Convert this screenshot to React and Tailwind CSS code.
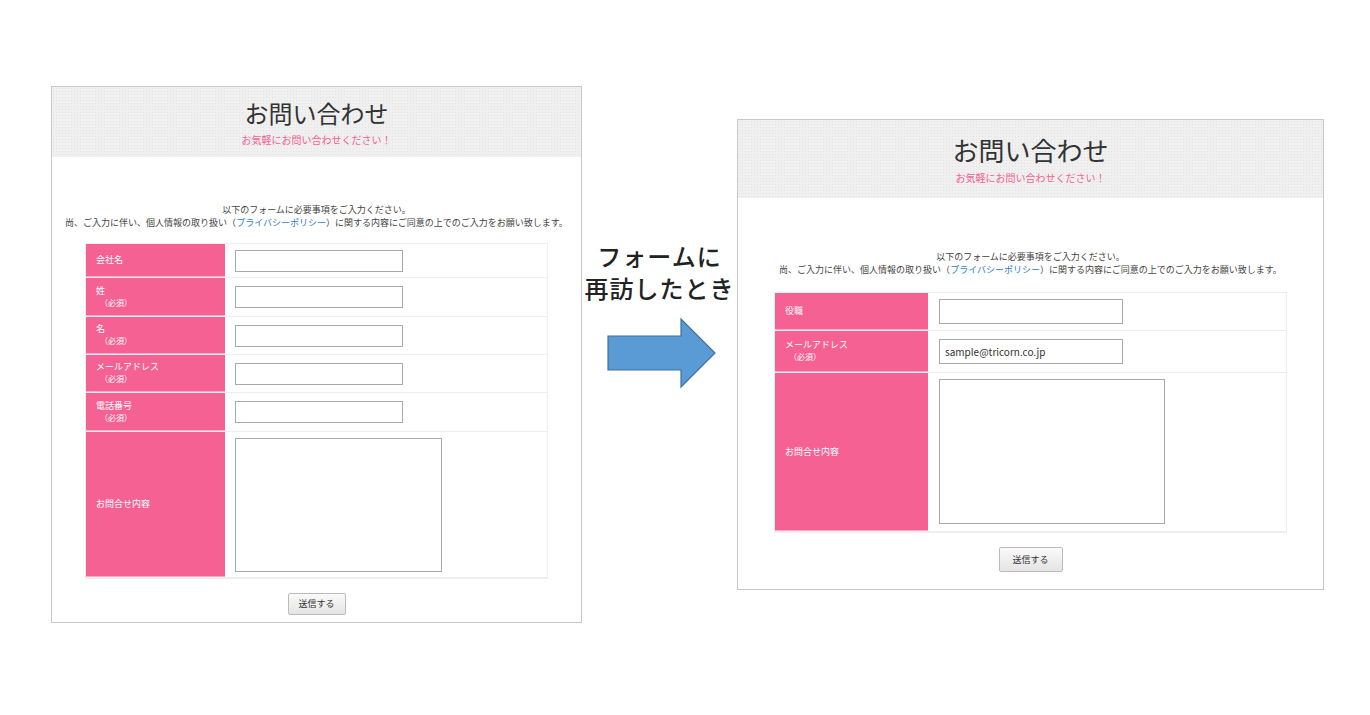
const F = { fontFamily: '"Noto Sans CJK JP", "Noto Sans", sans-serif' };
const hdrBg = {
  backgroundColor: '#f0f0f0',
  backgroundImage: 'radial-gradient(#e2e2e2 0.8px, transparent 0.8px)',
  backgroundSize: '3px 3px',
};

function Label({ t, req }) {
  return (
    <div className="w-full h-full bg-[#f46192] text-white text-[9px] leading-[12px] px-[10px] flex flex-col justify-center border-b border-[#f9a9c4]">
      <span>{t}</span>
      {req && <span className="pl-[4px] text-[8px]">（必須）</span>}
    </div>
  );
}

function Panel({ big, rows, w, h, hdrH }) {
  return (
    <div className={`bg-white border border-[#c8c8c8] flex flex-col ${w} ${h}`} style={F}>
      <div className={`${hdrH} flex flex-col items-center justify-center`} style={hdrBg}>
        <div className={big ? 'text-[26px] leading-[32px] text-[#333]' : 'text-[24px] leading-[30px] text-[#333]'}>お問い合わせ</div>
        <div className="text-[10px] text-[#f46192] mt-[4px]">お気軽にお問い合わせください！</div>
      </div>
      <div className={`text-[9px] leading-[13px] text-[#444] text-center whitespace-nowrap ${big ? 'mt-[52px]' : 'mt-[46px]'}`}>
        <div>以下のフォームに必要事項をご入力ください。</div>
        <div>尚、ご入力に伴い、個人情報の取り扱い（<span className="text-[#2a7dc9]">プライバシーポリシー</span>）に関する内容にご同意の上でのご入力をお願い致します。</div>
      </div>
      <div className={`${big ? 'mx-[36px] mt-[16px]' : 'mx-[33px] mt-[14px]'} border border-[#eee]`}>
        {rows.map((r, i) => (
          <div key={i} className="flex border-b border-[#eee]" style={{ height: r.h }}>
            <div className={`${big ? 'w-[153px]' : 'w-[139px]'} shrink-0 flex`}><Label t={r.t} req={r.req} /></div>
            <div className={`flex-1 ${big ? 'pl-[11px]' : 'pl-[10px]'} flex ${r.area ? 'items-start pt-[6px]' : 'items-center'}`}>
              {r.area ? (
                <div className={`${big ? 'w-[226px] h-[145px]' : 'w-[207px] h-[134px]'} border border-[#aaa]`} />
              ) : (
                <div className={`${big ? 'w-[184px] h-[25px]' : 'w-[168px] h-[22px]'} border border-[#aaa] text-[10px] text-[#333] px-[5px] flex items-center`}>{r.v || ''}</div>
              )}
            </div>
          </div>
        ))}
      </div>
      <div className="flex justify-center mt-[14px]">
        <div className={`${big ? 'w-[64px] h-[25px]' : 'w-[58px] h-[22px]'} border border-[#bbb] rounded-[2px] bg-gradient-to-b from-[#fafafa] to-[#e4e4e4] text-[9px] text-[#333] flex items-center justify-center`}>送信する</div>
      </div>
    </div>
  );
}

export default function App() {
  const left = [
    { t: '会社名', h: 34 }, { t: '姓', req: 1, h: 39 }, { t: '名', req: 1, h: 38 },
    { t: 'メールアドレス', req: 1, h: 38 }, { t: '電話番号', req: 1, h: 39 }, { t: 'お問合せ内容', h: 146, area: 1 },
  ];
  const right = [
    { t: '役職', h: 38 }, { t: 'メールアドレス', req: 1, h: 42, v: 'sample@tricorn.co.jp' }, { t: 'お問合せ内容', h: 159, area: 1 },
  ];
  return (
    <div className="w-[1370px] h-[715px] bg-white flex items-start" style={F}>
      <div className="ml-[51px] mt-[86px]"><Panel rows={left} w="w-[531px]" h="h-[537px]" hdrH="h-[70px]" /></div>
      <div className="w-[155px] mt-[240px] flex flex-col items-center">
        <div className="text-[24px] leading-[32px] text-[#222] font-medium text-center tracking-[1px]">フォームに<br />再訪したとき</div>
        <svg width="112" height="72" viewBox="0 0 112 72" className="mt-[14px] ml-[6px]">
          <polygon points="1,18 74,18 74,1 108,35 74,69 74,52 1,52" fill="#5b9bd5" stroke="#41719c" strokeWidth="1.2" />
        </svg>
      </div>
      <div className="mt-[119px]"><Panel big rows={right} w="w-[587px]" h="h-[471px]" hdrH="h-[78px]" /></div>
    </div>
  );
}
